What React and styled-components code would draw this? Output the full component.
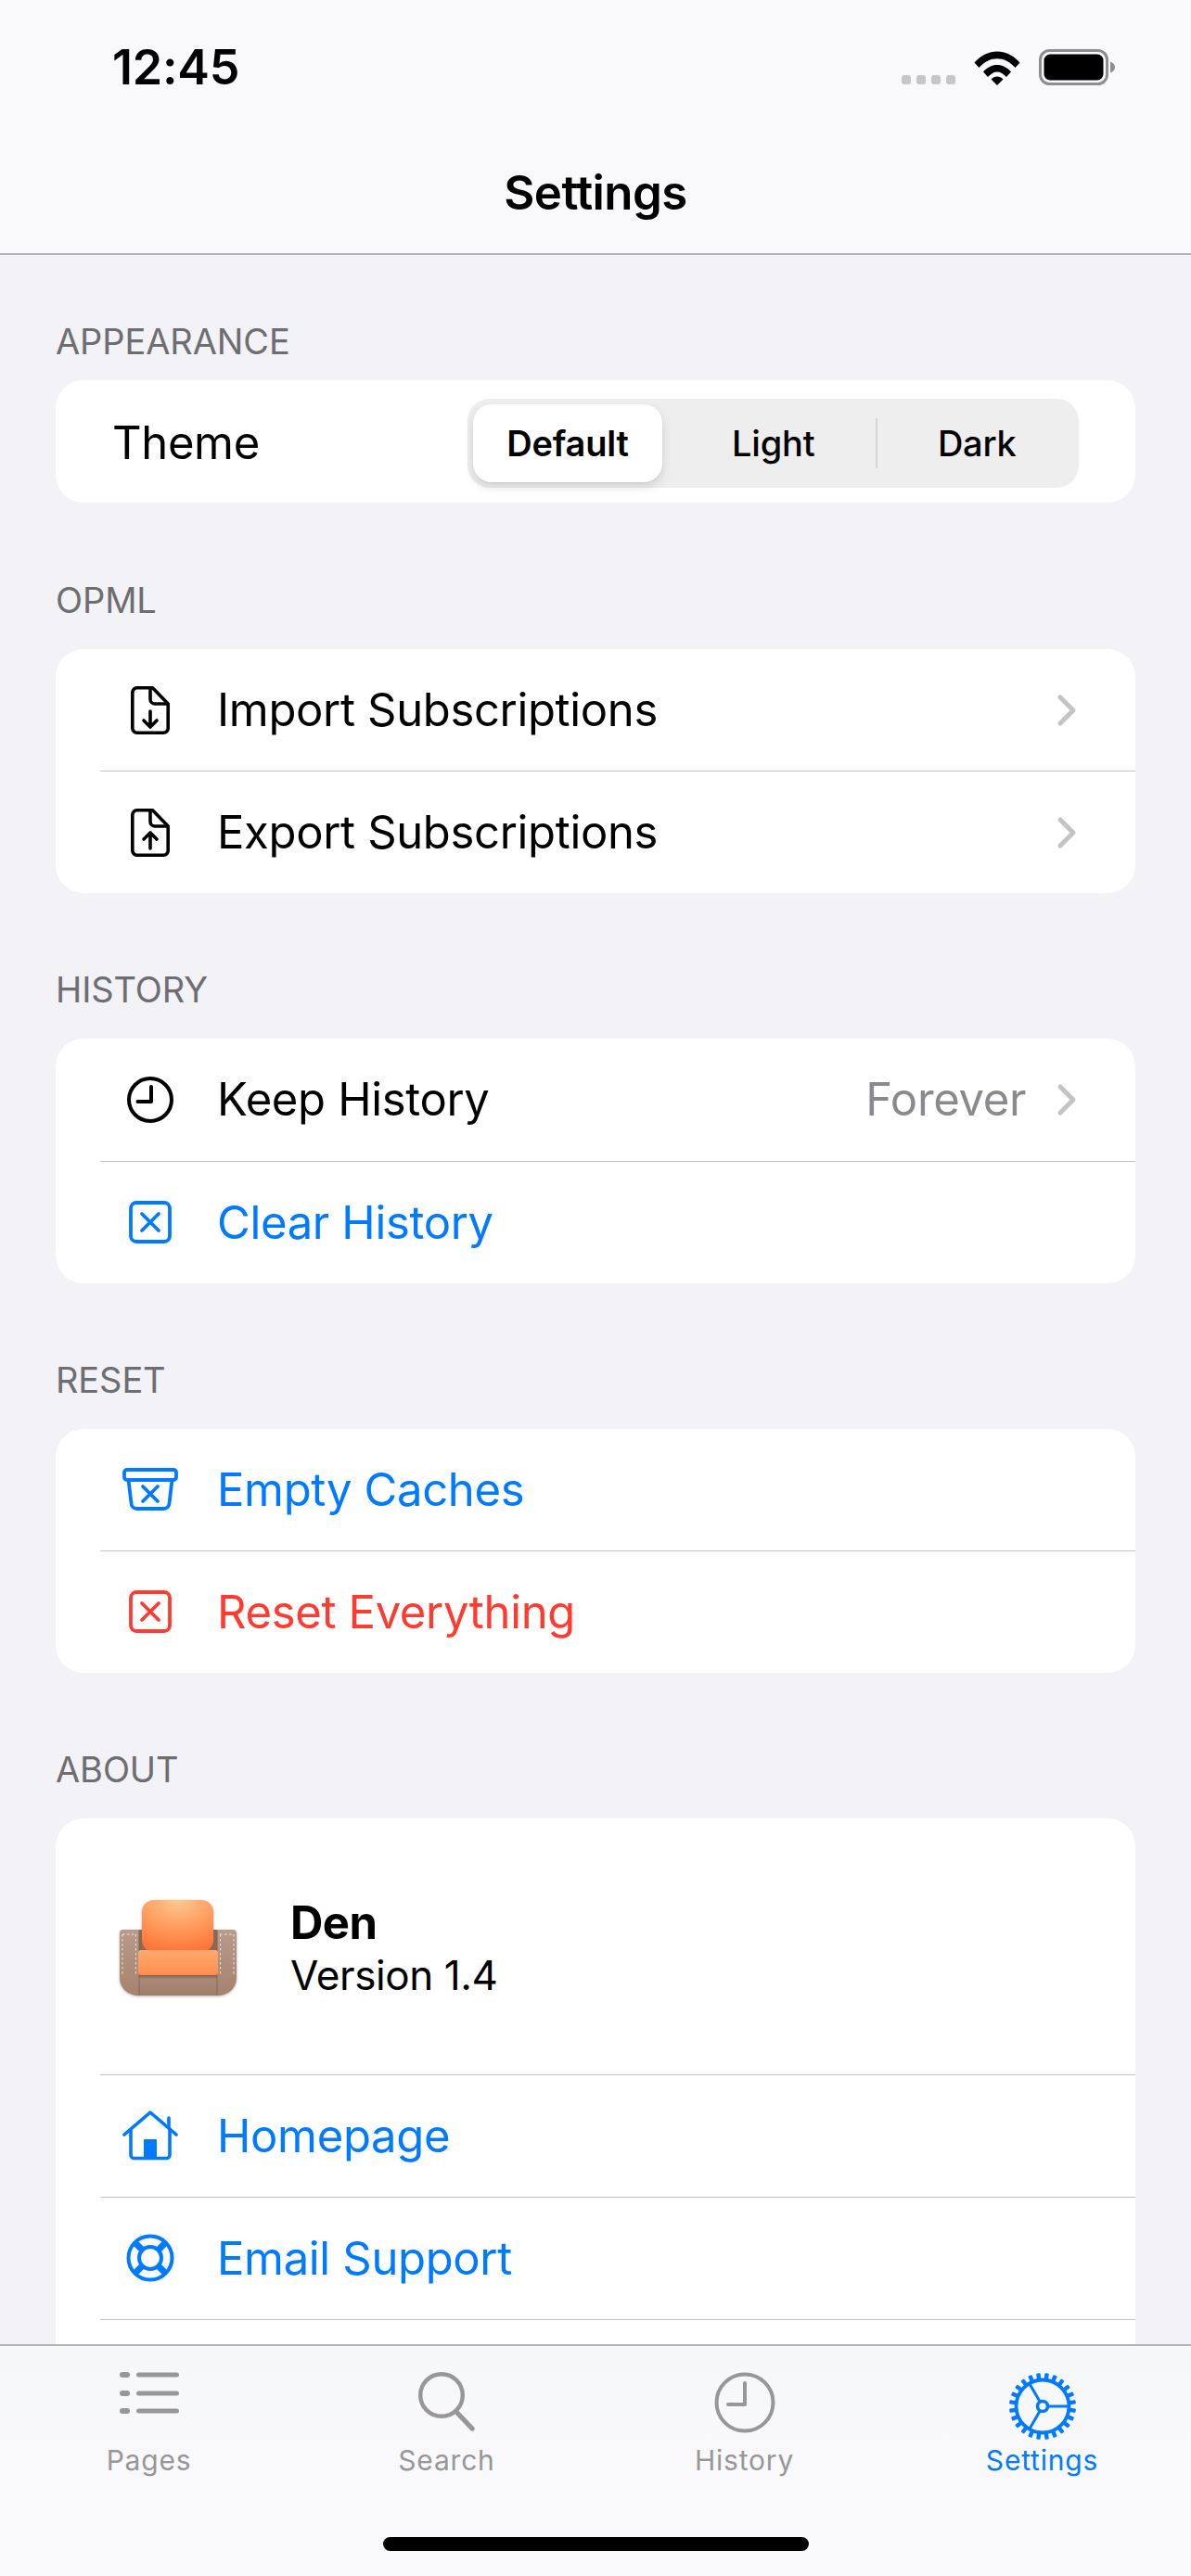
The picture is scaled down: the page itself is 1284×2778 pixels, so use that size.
import styled, { createGlobalStyle } from 'styled-components'
import { Fragment } from 'react'

const BLUE = '#007aff'
const RED = '#ff3b30'

const GlobalStyle = createGlobalStyle`
  html, body {
    margin: 0;
    padding: 0;
    background: #f2f2f7;
    font-family: Inter, "Noto Sans", sans-serif;
  }
  * {
    box-sizing: border-box;
  }
`

const Screen = styled.div`
  width: 1284px;
  height: 2778px;
  display: flex;
  flex-direction: column;
  overflow: hidden;
  background: #f2f2f7;
`

const NavBar = styled.header`
  height: 275px;
  flex-shrink: 0;
  background: #f9f9fb;
  border-bottom: 2px solid #b3b3b5;
`

const StatusBar = styled.div`
  height: 146px;
  padding: 53px 82px 0 121px;
  display: flex;
  justify-content: space-between;
  align-items: flex-start;
`

const Clock = styled.span`
  font-size: 52px;
  font-weight: 600;
  line-height: 40px;
  letter-spacing: -0.2px;
  color: #000;
`

const StatusIcons = styled.div`
  display: flex;
  align-items: flex-end;
  gap: 20px;
  height: 39px;
`

const SignalDots = styled.div`
  display: flex;
  gap: 6px;
  margin-bottom: 1px;
`

const SignalDot = styled.span`
  width: 10px;
  height: 10px;
  border-radius: 3px;
  background: #c7c7c9;
`

const NavTitle = styled.h1`
  margin: 0;
  height: 122px;
  display: flex;
  align-items: center;
  justify-content: center;
  font-size: 51px;
  font-weight: 600;
  letter-spacing: -0.6px;
  color: #000;
`

const Content = styled.main`
  flex: 1;
  min-height: 0;
  overflow: hidden;
  padding: 0 60px;
  display: flex;
  flex-direction: column;
  gap: 22px;
`

const Section = styled.section`
  flex-shrink: 0;
  display: flex;
  flex-direction: column;
  margin-bottom: ${p => (p.$first ? '1px' : '0')};
`

const SectionLabel = styled.h2`
  margin: 0;
  height: 135px;
  padding-bottom: ${p => (p.$first ? '19px' : '30px')};
  display: flex;
  align-items: flex-end;
  font-size: 38px;
  line-height: 46px;
  font-weight: 400;
  letter-spacing: -0.1px;
  color: #6d6d72;
  text-transform: uppercase;
`

const Card = styled.div`
  background: #fff;
  border-radius: 30px;
  overflow: hidden;
  flex-shrink: 0;
`

const ThemeRow = styled.div`
  height: 132px;
  padding: 3px 61px 0 61px;
  display: flex;
  align-items: center;
  justify-content: space-between;
`

const RowText = styled.span`
  font-size: 49px;
  letter-spacing: -0.35px;
  color: ${p => p.$color || '#000'};
`

const Segmented = styled.div`
  width: 659px;
  height: 96px;
  border-radius: 24px;
  background: #eeeeef;
  display: grid;
  grid-template-columns: repeat(3, 1fr);
`

const Segment = styled.div`
  position: relative;
  display: flex;
  align-items: center;
  justify-content: center;
  font-size: 38px;
  font-weight: ${p => (p.$active ? 600 : 500)};
  letter-spacing: -0.2px;
  color: #000;
`

const ActiveSegment = styled.div`
  width: 204px;
  height: 84px;
  margin: 6px 10px 6px 6px;
  border-radius: 20px;
  background: #fff;
  box-shadow: 0 5px 12px rgba(0, 0, 0, 0.12), 0 1px 2px rgba(0, 0, 0, 0.05);
  display: flex;
  align-items: center;
  justify-content: center;
`

const SegmentRule = styled.span`
  position: absolute;
  left: 0;
  top: 21px;
  bottom: 21px;
  width: 2px;
  background: #d5d5d7;
`

const Row = styled.div`
  height: 131.25px;
  margin-left: 48px;
  padding-left: 24px;
  padding-right: 60px;
  display: flex;
  align-items: center;
  gap: 42px;
  ${p => p.$divided && 'border-top: 1px solid #c4c4c6; height: 132px;'}
`

const IconSlot = styled.span`
  width: 60px;
  height: 60px;
  flex-shrink: 0;
  display: flex;
  align-items: center;
  justify-content: center;
`

const RowValue = styled.span`
  margin-left: auto;
  font-size: 49px;
  letter-spacing: -0.35px;
  color: #8a8a8e;
`

const Chevron = styled.svg`
  flex-shrink: 0;
  margin-left: ${p => (p.$push ? 'auto' : '-10px')};
  margin-right: 2px;
`

const AppRow = styled.div`
  height: 276px;
  padding: 4px 0 0 68px;
  display: flex;
  align-items: center;
  gap: 57px;
`

const LogoArt = styled.svg`
  flex-shrink: 0;
  filter: drop-shadow(0 1px 1.5px rgba(60, 40, 30, 0.35));
`

const AppText = styled.div`
  display: flex;
  flex-direction: column;
  gap: 3px;
`

const AppName = styled.span`
  font-size: 49px;
  line-height: 55px;
  font-weight: 700;
  letter-spacing: -0.6px;
  color: #000;
`

const AppVersion = styled.span`
  font-size: 44px;
  line-height: 52px;
  letter-spacing: -0.4px;
  color: #000;
`

const TabBar = styled.nav`
  height: 250px;
  flex-shrink: 0;
  background: linear-gradient(180deg, #f6f7f8 0%, #f9f9fb 60%);
  border-top: 2px solid #b3b3b5;
  padding-top: 28px;
  display: flex;
  flex-direction: column;
`

const Tabs = styled.div`
  display: grid;
  grid-template-columns: repeat(4, 1fr);
`

const Tab = styled.div`
  display: flex;
  flex-direction: column;
  align-items: center;
  color: ${p => (p.$active ? BLUE : '#979797')};
`

const TabIcon = styled.div`
  height: 77px;
`

const TabLabel = styled.span`
  font-size: 30px;
  line-height: 36px;
  font-weight: 400;
  letter-spacing: 0.8px;
`

const HomeIndicator = styled.div`
  width: 459px;
  height: 15px;
  margin: 65px auto 0;
  border-radius: 8px;
  background: #000;
`

const FileIcon = ({ up }) => (
  <svg width="42" height="52" viewBox="0 0 42 52" fill="none" stroke="#000" strokeWidth="3.6" strokeLinecap="round" strokeLinejoin="round">
    <path d="M7 1.8h16.5L40.2 19v26a5 5 0 0 1-5 5.2H7A5 5 0 0 1 1.8 45V7A5 5 0 0 1 7 1.8Z" />
    <path d="M21 2.5V14a5 5 0 0 0 5 5h13.5" />
    {up ? <path d="M21 43V27M14 33l7-7 7 7" /> : <path d="M21 27v16M14 37l7 7 7-7" />}
  </svg>
)

const ClockIcon = () => (
  <svg width="50" height="50" viewBox="0 0 50 50" fill="none" stroke="#000" strokeWidth="4" strokeLinecap="round" strokeLinejoin="round">
    <circle cx="25" cy="25" r="23" />
    <path d="M26 11v16H11.5" />
  </svg>
)

const XBoxIcon = ({ color }) => (
  <svg width="46" height="46" viewBox="0 0 46 46" fill="none" stroke={color} strokeWidth="3.8" strokeLinecap="round">
    <rect x="2" y="2" width="42" height="42" rx="6" />
    <path d="M14 14l18 18M32 14L14 32" />
  </svg>
)

const BoxIcon = () => (
  <svg width="60" height="46" viewBox="0 0 60 46" fill="none" stroke={BLUE} strokeWidth="3.8" strokeLinecap="round" strokeLinejoin="round">
    <rect x="2" y="2" width="56" height="11" rx="3" />
    <path d="M6.5 13l3 25a6 6 0 0 0 6 6h29a6 6 0 0 0 6-6l3-25" />
    <path d="M22 20l16 16M38 20L22 36" />
  </svg>
)

const HomeIcon = () => (
  <svg width="60" height="54" viewBox="0 0 60 54" fill="none" stroke={BLUE} strokeWidth="3.6" strokeLinecap="round" strokeLinejoin="round">
    <path d="M2 26L30 2l28 24" />
    <path d="M9 21v27a3.5 3.5 0 0 0 3.5 3.5h35A3.5 3.5 0 0 0 51 48V21" />
    <path d="M50 8v10" />
    <rect x="23" y="31" width="14" height="20" fill={BLUE} strokeWidth="0" rx="1" />
  </svg>
)

const LifebuoyIcon = () => (
  <svg width="52" height="52" viewBox="0 0 52 52" fill="none" stroke={BLUE}>
    <circle cx="26" cy="26" r="23.5" strokeWidth="4" />
    <circle cx="26" cy="26" r="12" strokeWidth="4" />
    <path d="M9.5 9.5l8 8M42.5 9.5l-8 8M9.5 42.5l8-8M42.5 42.5l-8-8" strokeWidth="7" />
  </svg>
)

const PagesIcon = () => (
  <svg width="64" height="46" viewBox="0 0 64 46" fill="#979797">
    {[0, 20, 39].map(y => (
      <Fragment key={y}>
        <rect x="0" y={y} width="11" height="6" rx="3" />
        <rect x="18" y={y + 0.5} width="46" height="5" rx="2.5" />
      </Fragment>
    ))}
  </svg>
)

const SearchIcon = () => (
  <svg width="62" height="64" viewBox="0 0 62 64" fill="none" stroke="#979797" strokeLinecap="round">
    <circle cx="25" cy="25" r="22.8" strokeWidth="4.4" />
    <path d="M41 43l17 18" strokeWidth="5.4" />
  </svg>
)

const HistoryIcon = () => (
  <svg width="66" height="66" viewBox="0 0 66 66" fill="none" stroke="#979797" strokeWidth="4" strokeLinecap="round" strokeLinejoin="round">
    <circle cx="33" cy="33" r="30.5" />
    <path d="M33 12v23H15" />
  </svg>
)

const GearIcon = () => (
  <svg width="74" height="74" viewBox="-37 -37 74 74" fill="none" stroke={BLUE}>
    {Array.from({ length: 24 }, (_, i) => (
      <rect key={i} x="-2.2" y="-36" width="4.4" height="9" rx="1" fill={BLUE} stroke="none" transform={`rotate(${i * 15 + 7.5})`} />
    ))}
    <circle r="28.5" strokeWidth="3.8" />
    <circle r="5.5" strokeWidth="3.6" />
    <path d="M5.5 0H28M-2.7 -4.8L-14.2 -24.6M-2.7 4.8L-14.2 24.6" strokeWidth="3" />
  </svg>
)

const WifiIcon = () => (
  <svg width="50" height="38" viewBox="0 0 50 38" fill="#000">
    <path d="M0.5 13.5C14.5 -2.5 35.5 -2.5 49.5 13.5L44.5 19C33 6 17 6 5.5 19Z" />
    <path d="M10 23.5C18.5 13.5 31.5 13.5 40 23.5L35 29C28.5 21.5 21.5 21.5 15 29Z" />
    <path d="M18.5 31.5C22 27.5 28 27.5 31.5 31.5L25 38Z" />
  </svg>
)

const BatteryIcon = () => (
  <svg width="82" height="39" viewBox="0 0 82 39">
    <rect x="1.5" y="1.5" width="72" height="36" rx="10" fill="none" stroke="#8e8e90" strokeWidth="3" />
    <rect x="5.5" y="5.5" width="64" height="28" rx="6.5" fill="#000" />
    <path d="M77 13.5c3 1 5 3 5 6s-2 5-5 6Z" fill="#8e8e90" />
  </svg>
)

const ChevronIcon = ({ push }) => (
  <Chevron $push={push} width="24" height="36" viewBox="0 0 24 36" fill="none" stroke="#c4c4c7" strokeWidth="5" strokeLinecap="round" strokeLinejoin="round">
    <path d="M5 4l14 14L5 32" />
  </Chevron>
)

const SofaLogo = () => (
  <LogoArt width="128" height="104" viewBox="0 0 128 104">
    <defs>
      <radialGradient id="backGrad" cx="0.5" cy="0" r="1">
        <stop offset="0" stopColor="#ffc98f" />
        <stop offset="0.5" stopColor="#ff9f62" />
        <stop offset="1" stopColor="#ff7437" />
      </radialGradient>
      <linearGradient id="seatGrad" x1="0" y1="0" x2="0" y2="1">
        <stop offset="0" stopColor="#ffa76e" />
        <stop offset="0.6" stopColor="#ff9a5c" />
        <stop offset="1" stopColor="#ff8c4e" />
      </linearGradient>
      <linearGradient id="armGrad" x1="0" y1="0" x2="0" y2="1">
        <stop offset="0" stopColor="#b89b8a" />
        <stop offset="1" stopColor="#a5826e" />
      </linearGradient>
      <linearGradient id="baseGrad" x1="0" y1="0" x2="0" y2="1">
        <stop offset="0" stopColor="#7f5f4e" />
        <stop offset="0.2" stopColor="#a98a76" />
        <stop offset="1" stopColor="#9f7d69" />
      </linearGradient>
    </defs>
    <rect x="14" y="32" width="100" height="50" fill="#8a6958" />
    <rect x="25" y="0" width="77" height="56" rx="13" fill="url(#backGrad)" />
    <rect x="22" y="81" width="84" height="22" fill="url(#baseGrad)" />
    <path d="M5 32h17v71H22C10 103 1 95 1 84V36a4 4 0 0 1 4-4Z" fill="url(#armGrad)" />
    <path d="M123 32h-17v71h0c12 0 21-8 21-19V36a4 4 0 0 0-4-4Z" fill="url(#armGrad)" />
    <path d="M22 33v70M106 33v70" stroke="#7d5e4d" strokeWidth="0.8" />
    <g fill="none" stroke="#f5ece5" strokeWidth="0.9" strokeDasharray="2.5 2.5">
      <path d="M4 37h15M4 37v44M18.5 37v44" />
      <path d="M109 37h15M124 37v44M109.5 37v44" />
    </g>
    <rect x="21" y="54" width="86" height="27" rx="3" fill="url(#seatGrad)" />
  </LogoArt>
)

const TABS = [
  { label: 'Pages', Icon: PagesIcon },
  { label: 'Search', Icon: SearchIcon },
  { label: 'History', Icon: HistoryIcon },
  { label: 'Settings', Icon: GearIcon, active: true },
]

const SECTIONS = [
  {
    label: 'OPML',
    rows: [
      { icon: <FileIcon />, text: 'Import Subscriptions', chevron: true },
      { icon: <FileIcon up />, text: 'Export Subscriptions', chevron: true },
    ],
  },
  {
    label: 'History',
    rows: [
      { icon: <ClockIcon />, text: 'Keep History', value: 'Forever', chevron: true },
      { icon: <XBoxIcon color={BLUE} />, text: 'Clear History', color: BLUE },
    ],
  },
  {
    label: 'Reset',
    rows: [
      { icon: <BoxIcon />, text: 'Empty Caches', color: BLUE },
      { icon: <XBoxIcon color={RED} />, text: 'Reset Everything', color: RED },
    ],
  },
]

const ABOUT_ROWS = [
  { icon: <HomeIcon />, text: 'Homepage', color: BLUE },
  { icon: <LifebuoyIcon />, text: 'Email Support', color: BLUE },
]

const SettingsRow = ({ row, divided }) => (
  <Row $divided={divided}>
    <IconSlot>{row.icon}</IconSlot>
    <RowText $color={row.color}>{row.text}</RowText>
    {row.value && <RowValue>{row.value}</RowValue>}
    {row.chevron && <ChevronIcon push={!row.value} />}
  </Row>
)

export default function App() {
  return (
    <>
      <GlobalStyle />
      <Screen>
        <NavBar>
          <StatusBar>
            <Clock>12:45</Clock>
            <StatusIcons>
              <SignalDots>
                <SignalDot />
                <SignalDot />
                <SignalDot />
                <SignalDot />
              </SignalDots>
              <WifiIcon />
              <BatteryIcon />
            </StatusIcons>
          </StatusBar>
          <NavTitle>Settings</NavTitle>
        </NavBar>
        <Content>
          <Section $first>
            <SectionLabel $first>Appearance</SectionLabel>
            <Card>
              <ThemeRow>
                <RowText>Theme</RowText>
                <Segmented>
                  <Segment $active>
                    <ActiveSegment>Default</ActiveSegment>
                  </Segment>
                  <Segment>Light</Segment>
                  <Segment>
                    <SegmentRule />
                    Dark
                  </Segment>
                </Segmented>
              </ThemeRow>
            </Card>
          </Section>
          {SECTIONS.map(section => (
            <Section key={section.label}>
              <SectionLabel>{section.label}</SectionLabel>
              <Card>
                {section.rows.map((row, i) => (
                  <SettingsRow key={row.text} row={row} divided={i > 0} />
                ))}
              </Card>
            </Section>
          ))}
          <Section>
            <SectionLabel>About</SectionLabel>
            <Card>
              <AppRow>
                <SofaLogo />
                <AppText>
                  <AppName>Den</AppName>
                  <AppVersion>Version 1.4</AppVersion>
                </AppText>
              </AppRow>
              {ABOUT_ROWS.map(row => (
                <SettingsRow key={row.text} row={row} divided />
              ))}
              <Row $divided />
            </Card>
          </Section>
        </Content>
        <TabBar>
          <Tabs>
            {TABS.map(({ label, Icon, active }) => (
              <Tab key={label} $active={active}>
                <TabIcon>
                  <Icon />
                </TabIcon>
                <TabLabel>{label}</TabLabel>
              </Tab>
            ))}
          </Tabs>
          <HomeIndicator />
        </TabBar>
      </Screen>
    </>
  )
}
